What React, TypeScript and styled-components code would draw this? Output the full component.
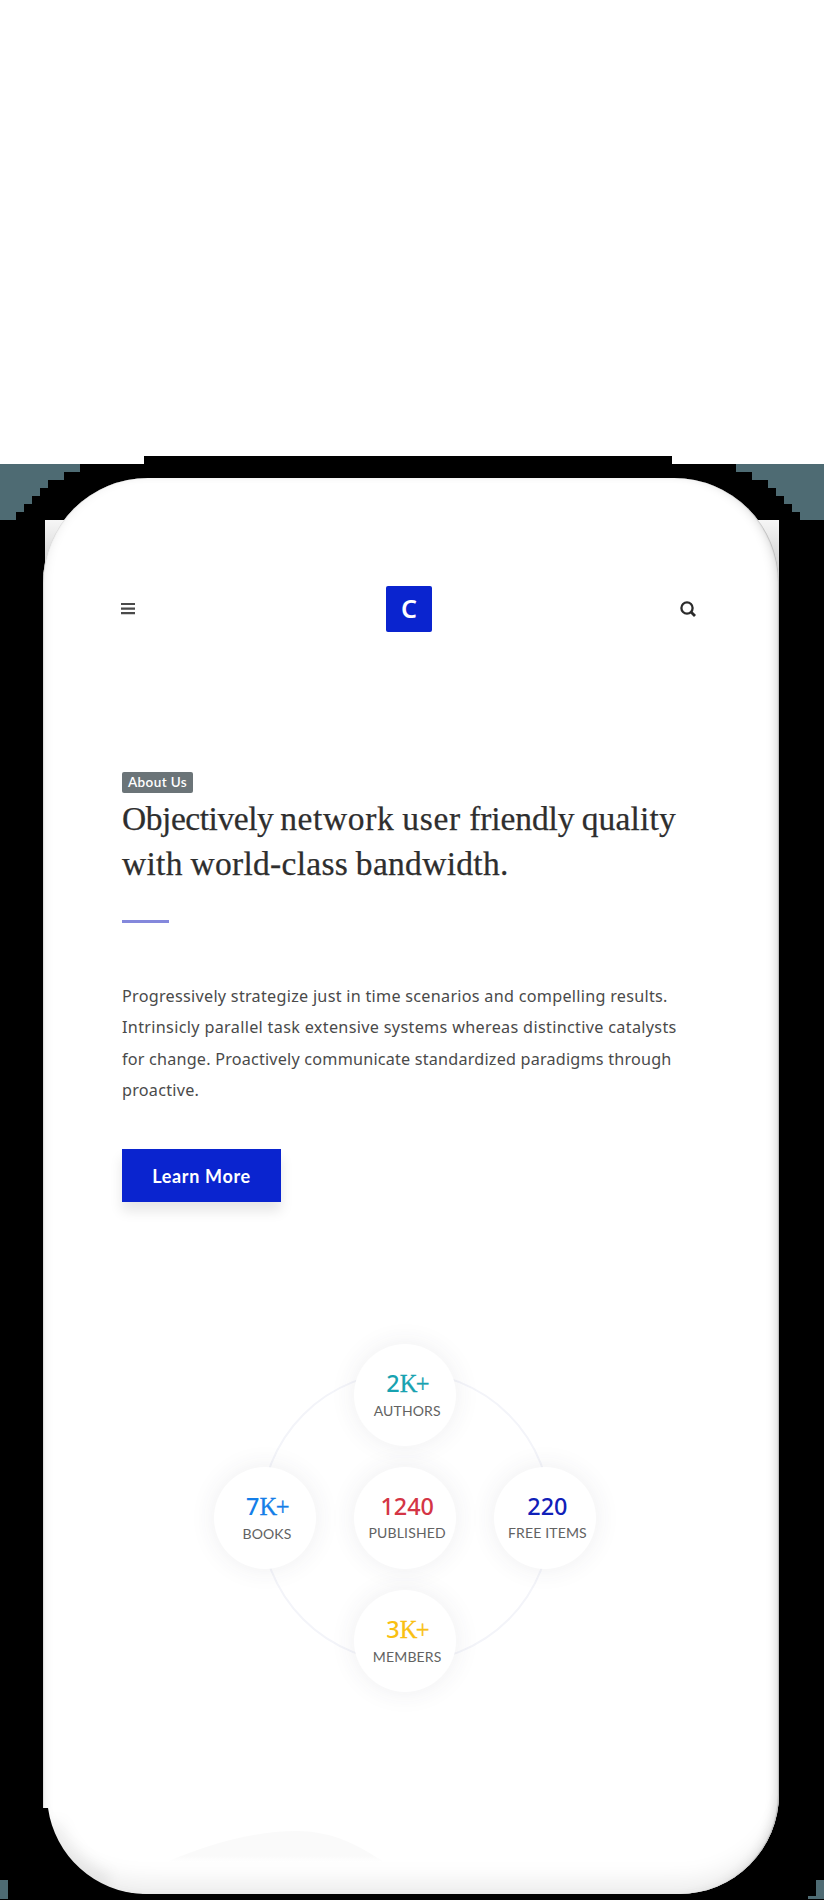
import React from "react";
import styled, { createGlobalStyle } from "styled-components";

const GlobalStyle = createGlobalStyle`
  * { box-sizing: border-box; }
  body { margin: 0; background: #fff; }
`;

const Stage = styled.div`
  position: relative;
  width: 824px;
  height: 1900px;
  overflow: hidden;
  padding: 478px 0 0 43px;
  font-family: "Lato", "Liberation Sans", sans-serif;
`;

const Artwork = styled.svg`
  position: absolute;
  inset: 0;
  display: block;
  pointer-events: none;
`;

const Screen = styled.main`
  position: relative;
  width: 736px;
  height: 1416px;
  padding: 108px 83px 0 79px;
  border-radius: 105px 105px 100px 104px / 105px 105px 100px 86px;
  background: #fff;
  box-shadow: inset -2px 0 1px -1px #bbb, inset 1px 0 1px -0.5px #ccc,
    inset -8px 0 12px -7px #ccc, inset 5px 0 12px -5px #e8e8e8,
    inset 0 -30px 24px -18px #ececec;
`;

const Header = styled.header`
  display: grid;
  grid-template-columns: 1fr 46px 1fr;
  align-items: center;
  height: 46px;
`;

const Logo = styled.div`
  height: 46px;
  border-radius: 2px;
  background: #0a24cf;
  color: #fff;
  font: 600 25px/44px "Noto Sans", sans-serif;
  text-align: center;
`;

const IconButton = styled.button<{ $end?: boolean }>`
  display: flex;
  justify-self: ${(p) => (p.$end ? "end" : "start")};
  margin: ${(p) => (p.$end ? "0 0.5px 0 0" : "0 0 0 -1px")};
  padding: 0;
  border: 0;
  background: none;
`;

const Badge = styled.span`
  display: block;
  width: 71px;
  height: 21px;
  margin-top: 140px;
  border-radius: 2px;
  background: #6b7478;
  color: #fff;
  font-size: 13.5px;
  font-weight: 600;
  line-height: 20px;
  letter-spacing: 0.4px;
  text-align: center;
  white-space: nowrap;
`;

const Title = styled.h1`
  margin: 3px 0 0;
  color: #2e2e2e;
  font: 400 33.5px/45px "Liberation Serif", serif;
  word-spacing: -1px;
  -webkit-text-stroke: 0.25px #2e2e2e;
`;

const Line = styled.span<{ $track: number }>`
  display: block;
  white-space: nowrap;
  letter-spacing: ${(p) => p.$track}px;
`;

const Word = styled.span<{ $track: number }>`
  letter-spacing: ${(p) => p.$track}px;
`;

const Rule = styled.hr`
  width: 47px;
  height: 3px;
  margin: 34px 0 0;
  border: 0;
  background: #8488dc;
`;

const Copy = styled.p`
  margin: 58px 0 0;
  color: #4a4a4a;
  font-family: "Noto Sans", sans-serif;
  font-size: 16.2px;
  line-height: 31.4px;
`;

const Action = styled.button`
  display: block;
  width: 159px;
  height: 53px;
  margin-top: 42.5px;
  padding: 0;
  border: 0;
  background: #0a24cf;
  box-shadow: 0 9px 12px rgba(0, 0, 0, 0.1);
  color: #fff;
  font: 700 18px/54px "Lato", sans-serif;
  letter-spacing: 0.65px;
`;

const Stats = styled.section`
  position: relative;
  display: grid;
  grid-template-columns: repeat(3, 102px);
  grid-template-rows: repeat(3, 102px);
  gap: 21px 38.2px;
  width: 383px;
  margin: 141.5px 0 0 92px;
`;

const Orbit = styled.div`
  position: absolute;
  left: 45.5px;
  top: 27px;
  width: 292px;
  height: 292px;
  border: 2px solid #f3f4f9;
  border-radius: 50%;
`;

const Stat = styled.div<{ $col: number; $row: number }>`
  position: relative;
  grid-column: ${(p) => p.$col};
  grid-row: ${(p) => p.$row};
  padding: 24px 0 0 4px;
  border-radius: 50%;
  background: #fff;
  box-shadow: 0 0 26px rgba(60, 60, 80, 0.085);
  text-align: center;
`;

const Figure = styled.div<{ $color: string }>`
  color: ${(p) => p.$color};
  font: 500 23.4px/30px "Noto Sans", sans-serif;
  white-space: nowrap;
`;

const Suffix = styled.span`
  font: 400 24.5px/30px "Liberation Serif", serif;
  letter-spacing: -1.5px;
  -webkit-text-stroke: 0.3px currentColor;
`;

const Label = styled.div`
  color: #626262;
  font-size: 14px;
  line-height: 21px;
  letter-spacing: 0.15px;
  margin: 1px -5px 0;
  white-space: nowrap;
`;

const stats = [
  { value: "2", suffix: "K+", label: "AUTHORS", color: "#17a2b0", col: 2, row: 1 },
  { value: "7", suffix: "K+", label: "BOOKS", color: "#147ee8", col: 1, row: 2 },
  { value: "1240", suffix: "", label: "PUBLISHED", color: "#d43545", col: 2, row: 2 },
  { value: "220", suffix: "", label: "FREE ITEMS", color: "#1020b8", col: 3, row: 2 },
  { value: "3", suffix: "K+", label: "MEMBERS", color: "#f9c012", col: 2, row: 3 },
];

const headline = [
  { text: "Objectively ", track: -0.45 },
  { text: "network ", track: 0.6 },
  { text: "user ", track: 0.75 },
  { text: "friendly ", track: -0.1 },
  { text: "quality", track: 0.15 },
];

const copyLines = [
  { text: "Progressively strategize just in time scenarios and compelling results.", track: 0.27 },
  { text: "Intrinsicly parallel task extensive systems whereas distinctive catalysts", track: 0.32 },
  { text: "for change. Proactively communicate standardized paradigms through", track: 0.2 },
  { text: "proactive.", track: 0.25 },
];

function PhoneBody() {
  return (
    <Artwork width="824" height="1900" viewBox="0 0 824 1900" shapeRendering="crispEdges">
      <defs>
        <linearGradient id="corner" x1="0" y1="0" x2="0" y2="1">
          <stop offset="0" stopColor="#f6f6f6" />
          <stop offset="1" stopColor="#c8c8c8" />
        </linearGradient>
      </defs>
      <path d="M0 464H144V456H672V464H824V1900H0Z" fill="#000" />
      <path d="M0 464H80V472H64V480H48V488H40V496H32V504H24V512H16V520H0Z" fill="#4e6b73" />
      <path d="M824 464H736V472H752V480H768V488H776V496H784V504H792V512H800V520H824Z" fill="#4e6b73" />
      <path d="M0 1880H8V1899H0ZM816 1880H824V1899H808V1896H816Z" fill="#4e6b73" />
      <path d="M45 520H120V580H45ZM700 520H779V580H700Z" fill="url(#corner)" />
    </Artwork>
  );
}

function LowerEdge() {
  return (
    <Artwork width="824" height="1900" viewBox="0 0 824 1900">
      <defs>
        <linearGradient id="hill" x1="0" y1="0" x2="0" y2="1">
          <stop offset="0.8" stopColor="#fafafa" />
          <stop offset="1" stopColor="#fafafa" stopOpacity="0" />
        </linearGradient>
        <filter id="soft" x="-30%" y="-30%" width="160%" height="160%">
          <feGaussianBlur stdDeviation="7" />
        </filter>
      </defs>
      <path d="M166 1862C205 1846 250 1831 297 1831C335 1831 362 1848 384 1862Z" fill="url(#hill)" />
      <path
        d="M52 1824A100 100 0 0 0 108 1884"
        fill="none"
        stroke="#000"
        strokeOpacity="0.06"
        strokeWidth="18"
        filter="url(#soft)"
      />
      <path d="M40 1808H48A100 100 0 0 0 143 1894V1900H40Z" fill="#000" />
    </Artwork>
  );
}

export default function App() {
  return (
    <Stage>
      <GlobalStyle />
      <PhoneBody />
      <Screen>
        <Header>
          <IconButton aria-label="Menu">
            <svg width="14" height="14" viewBox="0 0 14 14" fill="none" stroke="#4a4a4a" strokeWidth="2.2">
              <path d="M0 2H14M0 6.6H14M0 11.2H14" />
            </svg>
          </IconButton>
          <Logo>C</Logo>
          <IconButton $end aria-label="Search">
            <svg width="16" height="16" viewBox="0 0 16 16" fill="none" stroke="#2b2b2b" strokeWidth="2.3">
              <circle cx="7" cy="7" r="5.6" />
              <path d="M10.8 10.8L15 15" strokeWidth="2.8" />
            </svg>
          </IconButton>
        </Header>
        <Badge>About Us</Badge>
        <Title>
          <Line $track={0}>
            {headline.map((w) => (
              <Word key={w.text} $track={w.track}>{w.text}</Word>
            ))}
          </Line>
          <Line $track={0.3}>with world-class bandwidth.</Line>
        </Title>
        <Rule />
        <Copy>
          {copyLines.map((l) => (
            <Line key={l.text} $track={l.track}>{l.text}</Line>
          ))}
        </Copy>
        <Action>Learn More</Action>
        <Stats>
          <Orbit />
          {stats.map((s) => (
            <Stat key={s.label} $col={s.col} $row={s.row}>
              <Figure $color={s.color}>
                {s.value}
                {s.suffix && <Suffix>{s.suffix}</Suffix>}
              </Figure>
              <Label>{s.label}</Label>
            </Stat>
          ))}
        </Stats>
      </Screen>
      <LowerEdge />
    </Stage>
  );
}
